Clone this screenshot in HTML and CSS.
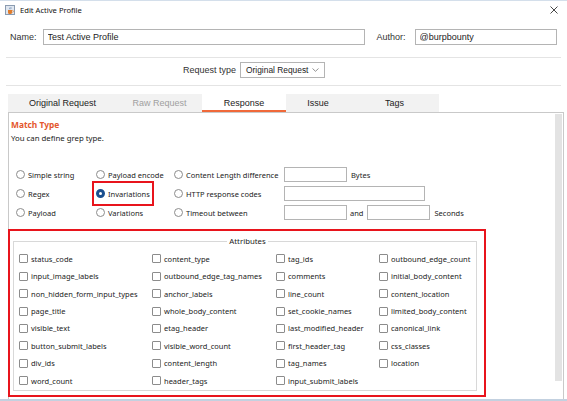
FILE: index.html
```html
<!DOCTYPE html>
<html lang="en">

<head>
  <meta charset="UTF-8">
  <meta name="viewport" content="width=device-width, initial-scale=1.0">
  <title>Edit Active Profile</title>
  <link rel="stylesheet" href="styles.css">
</head>

<body>
  <div class="window">
    <!-- 标题栏 -->
    <div class="titlebar">
      <svg class="app-icon" width="10" height="10" viewBox="0 0 10 10">
        <rect x="0.5" y="0.5" width="9" height="9" fill="#dfe6ef" stroke="#8a9bb0"/>
        <path d="M3 5h4v2.5a1.5 1.5 0 0 1-1.5 1.5h-1A1.5 1.5 0 0 1 3 7.5z" fill="#e07b2a"/>
        <path d="M7 5.6h0.8a0.8 0.8 0 0 1 0 1.6H7" fill="none" stroke="#e07b2a" stroke-width="0.6"/>
        <path d="M4.3 4.2c0-1 1-1 1-2M5.6 4.2c0-0.8 0.8-0.8 0.8-1.6" fill="none" stroke="#4b6fa0" stroke-width="0.6"/>
      </svg>
      <span class="title">Edit Active Profile</span>
      <svg class="close" width="8" height="8" viewBox="0 0 8 8">
        <path d="M0.5 0.5L7.5 7.5M7.5 0.5L0.5 7.5" stroke="#333" stroke-width="0.9"/>
      </svg>
    </div>

    <!-- 名称 / 作者 -->
    <div class="name-row">
      <label class="field-label" for="profile-name">Name:</label>
      <input class="text-input name-input" id="profile-name" type="text" value="Test Active Profile">
      <label class="field-label author-label" for="profile-author">Author:</label>
      <input class="text-input author-input" id="profile-author" type="text" value="@burpbounty">
    </div>
    <div class="sep"></div>

    <!-- 请求类型 -->
    <div class="type-row">
      <span class="field-label">Request type</span>
      <div class="select">
        <span>Original Request</span>
        <svg width="7" height="4" viewBox="0 0 7 4"><path d="M0.5 0.5L3.5 3.3L6.5 0.5" fill="none" stroke="#777" stroke-width="0.8"/></svg>
      </div>
    </div>
    <div class="sep sep-low"></div>

    <!-- 标签页 -->
    <div class="tabs">
      <div class="tab tab-original">Original Request</div>
      <div class="tab tab-raw disabled">Raw Request</div>
      <div class="tab tab-response active">Response</div>
      <div class="tab tab-issue">Issue</div>
      <div class="tab tab-tags">Tags</div>
    </div>

    <div class="panel">
      <div class="panel-body">
        <div class="section-title">Match Type</div>
        <div class="hint">You can define grep type.</div>

        <div class="grep-grid">
          <label class="radio"><span class="dot"></span>Simple string</label>
          <label class="radio"><span class="dot"></span>Payload encode</label>
          <label class="radio"><span class="dot"></span>Content Length difference</label>
          <div class="extra"><span class="box short"></span><span class="unit">Bytes</span></div>

          <label class="radio"><span class="dot"></span>Regex</label>
          <label class="radio marked"><span class="dot checked"></span>Invariations</label>
          <label class="radio"><span class="dot"></span>HTTP response codes</label>
          <div class="extra"><span class="box long"></span></div>

          <label class="radio"><span class="dot"></span>Payload</label>
          <label class="radio"><span class="dot"></span>Variations</label>
          <label class="radio"><span class="dot"></span>Timeout between</label>
          <div class="extra"><span class="box short"></span><span class="and">and</span><span class="box short"></span><span class="unit">Seconds</span></div>
        </div>

        <div class="attr-box">
          <fieldset class="attributes">
            <legend>Attributes</legend>
            <div class="attr-grid">
              <label class="check"><span class="sq"></span>status_code</label>
              <label class="check"><span class="sq"></span>content_type</label>
              <label class="check"><span class="sq"></span>tag_ids</label>
              <label class="check"><span class="sq"></span>outbound_edge_count</label>

              <label class="check"><span class="sq"></span>input_image_labels</label>
              <label class="check"><span class="sq"></span>outbound_edge_tag_names</label>
              <label class="check"><span class="sq"></span>comments</label>
              <label class="check"><span class="sq"></span>initial_body_content</label>

              <label class="check"><span class="sq"></span>non_hidden_form_input_types</label>
              <label class="check"><span class="sq"></span>anchor_labels</label>
              <label class="check"><span class="sq"></span>line_count</label>
              <label class="check"><span class="sq"></span>content_location</label>

              <label class="check"><span class="sq"></span>page_title</label>
              <label class="check"><span class="sq"></span>whole_body_content</label>
              <label class="check"><span class="sq"></span>set_cookie_names</label>
              <label class="check"><span class="sq"></span>limited_body_content</label>

              <label class="check"><span class="sq"></span>visible_text</label>
              <label class="check"><span class="sq"></span>etag_header</label>
              <label class="check"><span class="sq"></span>last_modified_header</label>
              <label class="check"><span class="sq"></span>canonical_link</label>

              <label class="check"><span class="sq"></span>button_submit_labels</label>
              <label class="check"><span class="sq"></span>visible_word_count</label>
              <label class="check"><span class="sq"></span>first_header_tag</label>
              <label class="check"><span class="sq"></span>css_classes</label>

              <label class="check"><span class="sq"></span>div_ids</label>
              <label class="check"><span class="sq"></span>content_length</label>
              <label class="check"><span class="sq"></span>tag_names</label>
              <label class="check"><span class="sq"></span>location</label>

              <label class="check"><span class="sq"></span>word_count</label>
              <label class="check"><span class="sq"></span>header_tags</label>
              <label class="check"><span class="sq"></span>input_submit_labels</label>
            </div>
          </fieldset>
        </div>
      </div>
      <div class="scrollbar"><div class="thumb"></div></div>
    </div>
  </div>
</body>

</html>
```

FILE: styles.css
```css
/* 全局样式 */
* {
  box-sizing: border-box;
}

body {
  margin: 0;
  font-family: "Liberation Sans", Arial, sans-serif;
  font-size: 9px;
  color: #222;
  background-color: #fff;
}

.window {
  width: 567px;
  height: 401px;
  display: flex;
  flex-direction: column;
  border-top: 1px solid #d4dfeb;
  border-bottom: 2px solid #c3d1e0;
  overflow: hidden;
}

/* 标题栏 */
.titlebar {
  height: 18px;
  display: flex;
  align-items: center;
  padding: 0 9px 0 5px;
  font-family: "Noto Sans", sans-serif;
  font-size: 7.6px;
  color: #111;
}

.app-icon {
  margin-right: 5px;
}

.close {
  margin-left: auto;
}

/* 名称行 */
.name-row {
  display: flex;
  align-items: center;
  margin-top: 10px;
  padding-left: 10px;
}

.field-label {
  color: #333;
}

.text-input {
  height: 16px;
  border: 1px solid #b4b4b4;
  padding: 0 4px;
  font-family: "Liberation Sans", Arial, sans-serif;
  font-size: 9px;
  color: #222;
  outline: none;
}

.name-input {
  width: 322px;
  margin-left: 6px;
}

.author-label {
  margin-left: 12px;
}

.author-input {
  width: 142px;
  margin-left: 9px;
}

.sep {
  height: 1px;
  margin: 12px 6px 0;
  background-color: #e4e4e4;
}

.sep-low {
  margin-top: 7px;
}

/* 请求类型 */
.type-row {
  display: flex;
  align-items: center;
  margin-top: 4px;
  padding-left: 183px;
}

.select {
  width: 85px;
  height: 16px;
  margin-left: 4px;
  display: flex;
  align-items: center;
  justify-content: space-between;
  padding: 0 5px 0 5px;
  border: 1px solid #b4b4b4;
  font-size: 8.4px;
  white-space: nowrap;
}

/* 标签页 */
.tabs {
  display: flex;
  width: 431px;
  height: 18px;
  margin: 8px 0 0 8px;
  background-color: #f2f2f2;
}

.tab {
  display: flex;
  align-items: center;
  justify-content: center;
  color: #222;
}

.tab-original { width: 109px; }
.tab-raw { width: 85px; }
.tab-response { width: 84px; }
.tab-issue { width: 64px; }
.tab-tags { width: 89px; }

.tab.disabled {
  color: #a0a0a0;
}

.tab.active {
  background-color: #fff;
  border-bottom: 2px solid #f0693a;
  padding-top: 2px;
}

/* 面板 */
.panel {
  flex: 1;
  display: flex;
  margin: 0 3px 0 8px;
  border: 1px solid #c9c9c9;
  border-bottom: none;
  font-family: "Noto Sans", sans-serif;
  font-size: 7.5px;
  color: #222;
}

.panel-body {
  flex: 1;
  display: flex;
  flex-direction: column;
}

.section-title {
  margin: 6px 0 0 2px;
  font-weight: bold;
  font-size: 8.4px;
  color: #e4572e;
}

.hint {
  margin: 3px 0 0 2px;
  font-size: 7.8px;
}

.grep-grid {
  display: grid;
  grid-template-columns: 80px 78px 110px auto;
  grid-auto-rows: 19px;
  margin: 22px 0 0 7px;
}

.radio {
  display: flex;
  align-items: center;
  justify-self: start;
  white-space: nowrap;
}

.dot {
  width: 9px;
  height: 9px;
  margin-right: 3px;
  border: 1px solid #8c8c8c;
  border-radius: 50%;
  background-color: #fff;
}

.dot.checked {
  border: 3px solid #1b4f8f;
}

.radio.marked {
  height: 17px;
  align-self: center;
  outline: 2px solid #e8141c;
  outline-offset: 2px;
}

.extra {
  display: flex;
  align-items: center;
}

.box {
  height: 15px;
  border: 1px solid #b4b4b4;
}

.box.short { width: 63px; }
.box.long { width: 141px; }

.unit {
  margin-left: 4px;
}

.and {
  margin: 0 4px 0 3px;
}

/* 属性区域 */
.attr-box {
  width: 478px;
  height: 168px;
  margin: 7px 0 0 -1px;
  border: 2px solid #e8141c;
  padding: 5px 7px 4px 3px;
  display: flex;
}

.attributes {
  flex: 1;
  margin: 0;
  padding: 0 0 0 5px;
  border: 1px solid #d8d8d8;
  min-width: 0;
}

.attributes legend {
  margin: 0 auto;
  padding: 0 2px;
  font-size: 7.8px;
}

.attr-grid {
  display: grid;
  grid-template-columns: 133px 124px 103px auto;
  grid-auto-rows: 17.45px;
  margin-top: 4px;
}

.check {
  display: flex;
  align-items: center;
  white-space: nowrap;
}

.sq {
  width: 9px;
  height: 9px;
  margin-right: 3px;
  border: 1px solid #8c8c8c;
  border-radius: 1px;
  background-color: #fff;
}

/* 滚动条 */
.scrollbar {
  width: 9px;
  padding: 1px 1px 0;
}

.thumb {
  height: 267px;
  background-color: #e3e3e3;
}
```
